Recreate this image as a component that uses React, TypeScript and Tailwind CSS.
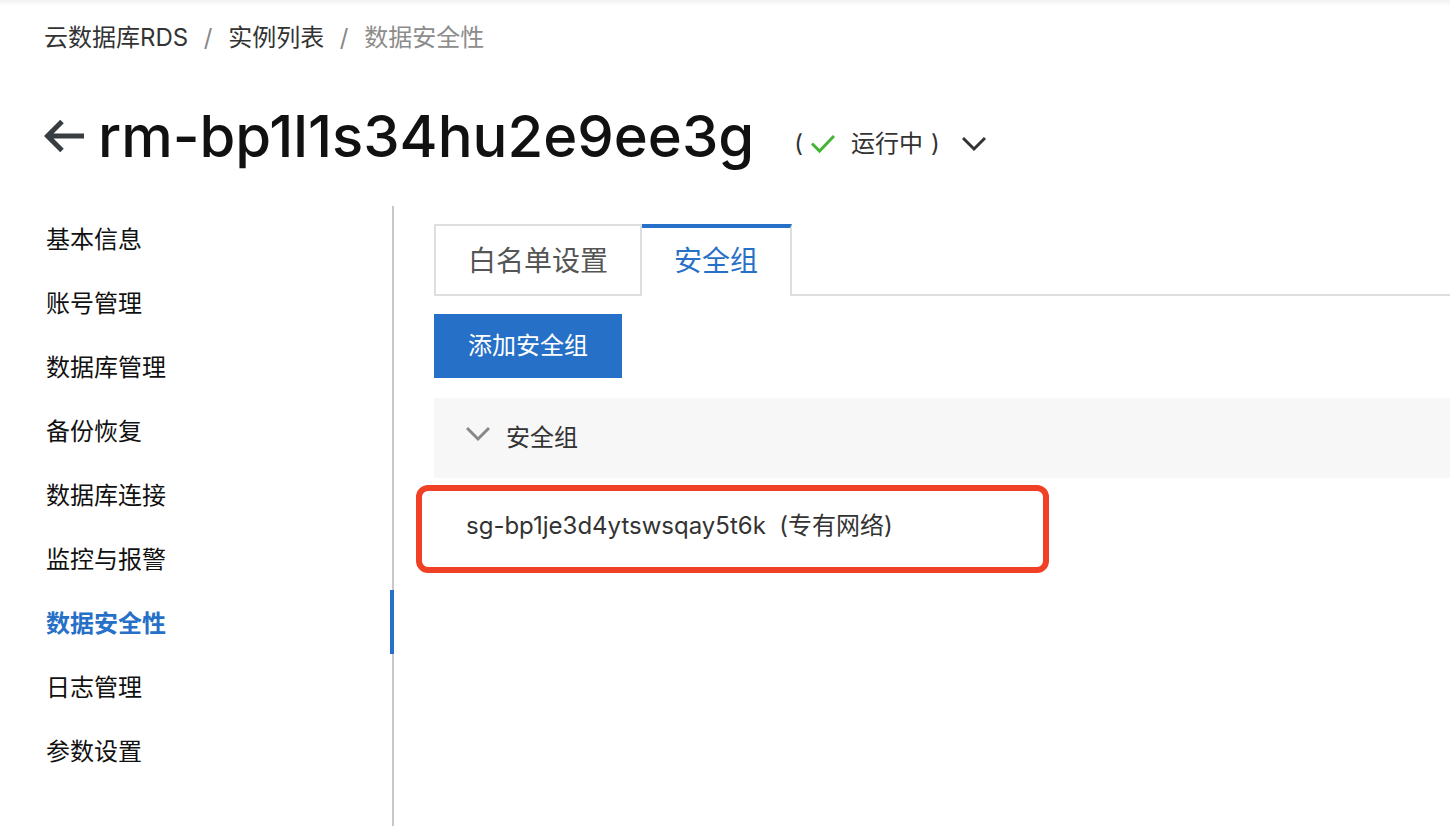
import { useState } from "react";

const menuItems = [
  "基本信息",
  "账号管理",
  "数据库管理",
  "备份恢复",
  "数据库连接",
  "监控与报警",
  "数据安全性",
  "日志管理",
  "参数设置",
];

const tabs = ["白名单设置", "安全组"];

function Breadcrumb() {
  return (
    <nav className="flex items-center pl-11 pt-3.5 leading-9 text-[#333333]">
      <a href="#rds">云数据库RDS</a>
      <span className="w-10 text-center text-[#888888]">/</span>
      <a href="#instances">实例列表</a>
      <span className="w-10 text-center text-[#888888]">/</span>
      <span className="text-[#8c8c8c]">数据安全性</span>
    </nav>
  );
}

function Header() {
  return (
    <header className="flex items-center pl-11 pt-[35px]">
      <a href="#back" aria-label="返回" className="mr-3.5 shrink-0">
        <svg width="40" height="34" viewBox="0 0 40 34" fill="none" stroke="#373d41" strokeWidth="5">
          <path d="M3 17H40M18 2.5L3.5 17L18 31.5" />
        </svg>
      </a>
      <h1 className="text-[58px] font-medium leading-[90px] text-[#111111]">
        rm-bp1l1s34hu2e9ee3g
      </h1>
      <div className="ml-10 flex items-center pt-4 leading-9 text-[#333333]">
        <span>(</span>
        <svg className="ml-2" width="24" height="20" viewBox="0 0 24 20" fill="none" stroke="#44b336" strokeWidth="3">
          <path d="M1 9.5L8.5 17L23 2" />
        </svg>
        <span className="ml-4">运行中</span>
        <span className="ml-2">)</span>
        <button type="button" aria-label="更多" className="ml-[22px] cursor-pointer">
          <svg width="24" height="16" viewBox="0 0 24 16" fill="none" stroke="#333333" strokeWidth="3">
            <path d="M1 2L12 13L23 2" />
          </svg>
        </button>
      </div>
    </header>
  );
}

function Sidebar() {
  const [active, setActive] = useState("数据安全性");

  return (
    <aside className="w-[394px] shrink-0 border-r-2 border-[#c8c8c8]">
      <ul>
        {menuItems.map((item) => (
          <li key={item}>
            <a
              href="#menu"
              onClick={() => setActive(item)}
              className={`-mr-0.5 block h-16 border-r-4 pl-[46px] leading-[68px] ${
                item === active
                  ? "border-[#2670c7] font-semibold text-[#2670c7]"
                  : "border-transparent text-[#111111]"
              }`}
            >
              {item}
            </a>
          </li>
        ))}
      </ul>
    </aside>
  );
}

export default function App() {
  const [tab, setTab] = useState("安全组");
  const [open, setOpen] = useState(true);

  return (
    <div className="flex min-h-screen flex-col bg-white font-['Inter','Noto_Sans_CJK_SC',sans-serif] text-2xl">
      <div className="h-1.5 bg-linear-to-b from-[#f2f2f2] to-white" />
      <Breadcrumb />
      <Header />

      <div className="mt-[25px] flex grow">
        <Sidebar />

        <main className="min-w-0 grow pl-10 pt-[18px]">
          <div role="tablist" className="flex text-[28px]">
            {tabs.map((name) => (
              <button
                key={name}
                type="button"
                role="tab"
                aria-selected={name === tab}
                onClick={() => setTab(name)}
                className={`h-[72px] cursor-pointer px-8 ${
                  name === tab
                    ? "border-r-2 border-t-4 border-r-[#dedede] border-t-[#2670c7] text-[#2670c7]"
                    : "border-2 border-[#dedede] pt-1 text-[#555555]"
                }`}
              >
                {name}
              </button>
            ))}
            <div className="grow border-b-2 border-[#dedede]" />
          </div>

          <button
            type="button"
            className="mt-[18px] block h-16 cursor-pointer bg-[#2670c7] px-[34px] text-white"
          >
            添加安全组
          </button>

          <section className="mt-5">
            <button
              type="button"
              aria-expanded={open}
              onClick={() => setOpen(!open)}
              className="flex h-20 w-full cursor-pointer items-center bg-[#f7f7f7] pl-8 text-[#333333]"
            >
              <svg className="mb-1 mr-4" width="24" height="20" viewBox="0 0 24 20" fill="none" stroke="#888888" strokeWidth="3">
                <path d="M1 2L12 13L23 2" />
              </svg>
              安全组
            </button>
            {open && (
              <div className="-ml-[18px] mr-4 mt-[7px] flex h-[88px] max-w-[633px] items-center whitespace-pre rounded-xl border-6 border-[#f04126] pb-1.5 pl-11 text-[#333333]">
                sg-bp1je3d4ytswsqay5t6k{"  "}(专有网络)
              </div>
            )}
          </section>
        </main>
      </div>
    </div>
  );
}
